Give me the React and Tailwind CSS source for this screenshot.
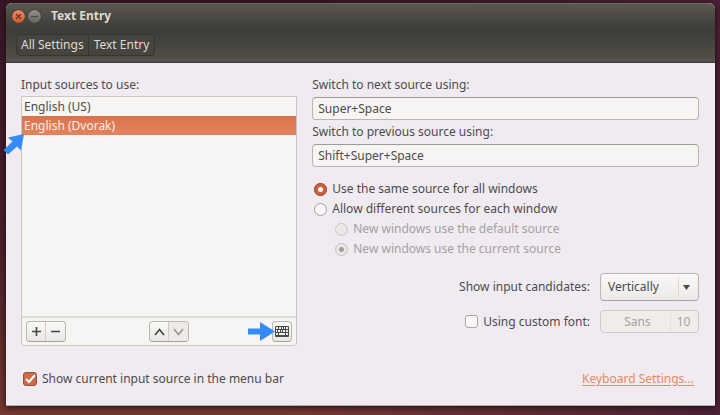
import React from "react";

const inputClass =
  "h-[23px] w-full rounded-[4px] border border-[#b9b6b1] border-t-[#9d9b98] bg-[#f6f5f3] px-[5px] text-[#4c4c4c] outline-none";

const groupClass =
  "flex h-[21px] overflow-hidden rounded-[4px] border border-[#b9b7b2] border-b-[#a5a39f] bg-linear-to-b from-[#fbfaf9] to-[#e9e7e5]";

function ShortcutField({ id, label, value }) {
  return (
    <div className="flex flex-col gap-[3px]">
      <label htmlFor={id}>{label}</label>
      <input id={id} type="text" defaultValue={value} className={inputClass} />
    </div>
  );
}

function Radio({ id, name, label, checked, disabled }) {
  return (
    <div className={disabled ? "flex h-5 items-center gap-[5px] pl-[23px] text-[#a3a19f]" : "flex h-5 items-center gap-[5px] pl-[2px]"}>
      <input
        id={id}
        name={name}
        type="radio"
        defaultChecked={checked}
        disabled={disabled}
        className="size-[13px] shrink-0 appearance-none rounded-full border border-[#a3a09c] bg-[#f8f7f5] checked:border-4 checked:border-[#c9633f] checked:outline checked:-outline-offset-1 checked:outline-[#9a5036] disabled:border disabled:border-[#cac7c5] disabled:bg-[#eae8e7] disabled:outline-none disabled:checked:border disabled:checked:border-[#c2bfbd] disabled:checked:bg-[radial-gradient(circle,#a09e9c_2px,#eae8e7_3px)]"
      />
      <label htmlFor={id}>{label}</label>
    </div>
  );
}

function KeyboardIcon() {
  return (
    <svg width="14" height="11" viewBox="0 0 14 11" aria-hidden="true">
      <rect width="14" height="11" rx="1" fill="#4a4a4a" />
      <path
        d="M1 1h2v2H1zM4 1h2v2H4zM7 1h1v2H7zM9 1h1v2H9zM11 1h2v2h-2zM1 4h1v2H1zM3 4h2v2H3zM6 4h1v2H6zM8 4h2v2H8zM11 4h2v2h-2zM1 7h2v2H1zM4 7h6v2H4zM11 7h2v2h-2z"
        fill="#efeeec"
      />
    </svg>
  );
}

function Header() {
  return (
    <header className="flex h-[60px] flex-col rounded-t-[6px] border-t border-b border-t-[#6b6961] border-b-[#3c3b36] bg-[linear-gradient(#59574f,#3c3b37_45%,#403f3a_55%,#54524a)] text-[#dfdbd2]">
      <div className="flex h-6 items-center px-[6px]">
        <div className="flex gap-[3px]">
          <button
            type="button"
            aria-label="Close"
            className="flex size-[13px] items-center justify-center rounded-full bg-linear-to-b from-[#f58a65] to-[#d4562c] outline outline-[#45443e]"
          >
            <svg width="7" height="7" viewBox="0 0 7 7" aria-hidden="true">
              <path d="M1 1l5 5M6 1L1 6" stroke="#6b3a29" strokeWidth="1.4" />
            </svg>
          </button>
          <button
            type="button"
            aria-label="Minimize"
            className="flex size-[13px] items-center justify-center rounded-full bg-linear-to-b from-[#92918a] to-[#65645e] outline outline-[#45443e]"
          >
            <svg width="7" height="7" viewBox="0 0 7 7" aria-hidden="true">
              <path d="M0 3.5h7" stroke="#4a4943" strokeWidth="1.2" />
            </svg>
          </button>
        </div>
        <h1 className="ml-[10px] font-bold">Text Entry</h1>
      </div>
      <nav className="mt-[6px] ml-[10px] flex h-[22px] self-start rounded-[4px] border border-[#36352f] bg-[#45443f]">
        <button type="button" className="border-r border-[#36352f] px-1">
          All Settings
        </button>
        <button type="button" className="px-[5px]">
          Text Entry
        </button>
      </nav>
    </header>
  );
}

function SourceList() {
  return (
    <section className="relative flex flex-col gap-[2px]">
      <h2 id="sources">Input sources to use:</h2>
      <div className="flex grow flex-col rounded-b-[3px] border border-[#cbc8c4] bg-[#f6f5f3]">
        <ul role="listbox" aria-labelledby="sources" className="min-h-[219px] grow">
          <li role="option" aria-selected="false" className="h-[19px] px-[2px] leading-[19px]">
            English (US)
          </li>
          <li
            role="option"
            aria-selected="true"
            className="h-[19px] bg-linear-to-b from-[#d9734d] to-[#e3835e] px-[2px] leading-[19px] text-[#fbeee8]"
          >
            English (Dvorak)
          </li>
        </ul>
        <div className="flex h-[29px] items-center justify-between border-t-2 border-[#dedcd9] px-1">
          <div className={groupClass}>
            <button type="button" aria-label="Add source" className="flex w-[19px] items-center justify-center border-r border-[#d0cdc9]">
              <svg width="9" height="9" viewBox="0 0 9 9" aria-hidden="true">
                <path d="M4.5 0v9M0 4.5h9" stroke="#454545" strokeWidth="1.6" />
              </svg>
            </button>
            <button type="button" aria-label="Remove source" className="flex w-[19px] items-center justify-center">
              <svg width="9" height="9" viewBox="0 0 9 9" aria-hidden="true">
                <path d="M0 4.5h9" stroke="#454545" strokeWidth="1.6" />
              </svg>
            </button>
          </div>
          <div className={groupClass}>
            <button type="button" aria-label="Move up" className="flex w-[19px] items-center justify-center border-r border-[#d0cdc9]">
              <svg width="11" height="8" viewBox="0 0 11 8" aria-hidden="true">
                <path d="M1 7l4.5-5.5L10 7" fill="none" stroke="#454545" strokeWidth="1.7" />
              </svg>
            </button>
            <button type="button" disabled aria-label="Move down" className="flex w-[19px] items-center justify-center bg-[#edeae9]">
              <svg width="11" height="8" viewBox="0 0 11 8" aria-hidden="true">
                <path d="M1 1l4.5 5.5L10 1" fill="none" stroke="#96938f" strokeWidth="1.5" />
              </svg>
            </button>
          </div>
          <div className={groupClass}>
            <button type="button" aria-label="Show keyboard layout" className="flex w-[18px] items-center justify-center">
              <KeyboardIcon />
            </button>
          </div>
        </div>
      </div>
      <svg className="absolute top-[57px] -left-[18px]" width="22" height="22" viewBox="0 0 22 22" aria-hidden="true">
        <path d="M21 1L18 17.500 14 13.500 5 21.500 .5 17 9.500 8.500 5 4.500z" fill="#338cf5" />
      </svg>
      <svg className="absolute right-[21px] bottom-[5px]" width="28" height="19" viewBox="0 0 28 19" aria-hidden="true">
        <path d="M0 6.500h12V0l15 9.500L12 19v-6.500H0z" fill="#338cf5" />
      </svg>
    </section>
  );
}

function SwitchingOptions() {
  return (
    <section className="flex flex-col">
      <div className="flex flex-col gap-[3px]">
        <ShortcutField id="next" label="Switch to next source using:" value="Super+Space" />
        <ShortcutField id="previous" label="Switch to previous source using:" value="Shift+Super+Space" />
      </div>
      <div className="mt-3 flex flex-col">
        <Radio id="same" name="scope" label="Use the same source for all windows" checked />
        <Radio id="different" name="scope" label="Allow different sources for each window" />
        <Radio id="default-source" name="initial" label="New windows use the default source" disabled />
        <Radio id="current-source" name="initial" label="New windows use the current source" checked disabled />
      </div>
      <div className="mt-[14px] grid grid-cols-[auto_99px] items-center justify-end gap-x-[10px] gap-y-[9px]">
        <label htmlFor="candidates" className="text-right">
          Show input candidates:
        </label>
        <div className="relative">
          <select
            id="candidates"
            className="h-7 w-full appearance-none rounded-[4px] border border-[#b9b7b2] border-b-[#a5a39f] bg-linear-to-b from-[#f9f8f7] to-[#eceae8] px-[7px] text-[#4c4c4c]"
          >
            <option>Vertically</option>
            <option>Horizontally</option>
          </select>
          <span className="pointer-events-none absolute inset-y-1 right-0 flex w-[21px] items-center border-l border-[#dad7d4] pl-1">
            <svg width="7" height="5" viewBox="0 0 7 5" aria-hidden="true">
              <path d="M0 0h7L3.5 5z" fill="#484848" />
            </svg>
          </span>
        </div>
        <div className="flex items-center justify-end gap-[5px]">
          <input
            id="custom-font"
            type="checkbox"
            className="size-[13px] appearance-none rounded-[3px] border border-[#a9a6a2] bg-[#f8f7f5]"
          />
          <label htmlFor="custom-font">Using custom font:</label>
        </div>
        <button
          type="button"
          disabled
          className="flex h-[23px] items-center rounded-[4px] border border-[#cdcac7] bg-[#efecea] text-[#a3a19f]"
        >
          <span className="grow pl-1 text-center">Sans</span>
          <span className="w-7 border-l border-[#e2dfdd] pr-[2px] text-center">10</span>
        </button>
      </div>
    </section>
  );
}

export default function App() {
  return (
    <div className="min-h-screen bg-[linear-gradient(to_right,transparent_40%,#4a2136),linear-gradient(#361826,#4b202a_60%,#74392f)] pt-[3px] pr-[5px] pb-[9px] pl-[6px] font-['Noto_Sans','Open_Sans',sans-serif] text-[12px] leading-[18px] text-[#4c4c4c]">
      <div className="rounded-t-[6px] bg-[#f0ebf0] shadow-[0_1px_6px_#1a0a10]">
        <Header />
        <main className="border-b border-[#b5aca8] pt-[13px] pr-4 pb-[17px] pl-[15px]">
          <div className="grid grid-cols-[5fr_7fr] gap-[15px]">
            <SourceList />
            <SwitchingOptions />
          </div>
          <footer className="mt-6 flex items-center justify-between pr-[5px] pl-[2px]">
            <div className="flex items-center gap-[5px]">
              <span className="relative flex">
                <input
                  id="menu-bar"
                  type="checkbox"
                  defaultChecked
                  className="size-[14px] appearance-none rounded-[3px] border border-[#8a5442] bg-[#f8f7f5] checked:bg-[#cf6a46]"
                />
                <svg className="pointer-events-none absolute inset-0" width="14" height="14" viewBox="0 0 14 14" aria-hidden="true">
                  <path d="M3 7l3 3 6-7" fill="none" stroke="#fff" strokeWidth="2" />
                </svg>
              </span>
              <label htmlFor="menu-bar">Show current input source in the menu bar</label>
            </div>
            <a href="#keyboard" className="text-[#e58a62] underline underline-offset-2">
              Keyboard Settings...
            </a>
          </footer>
        </main>
      </div>
    </div>
  );
}
